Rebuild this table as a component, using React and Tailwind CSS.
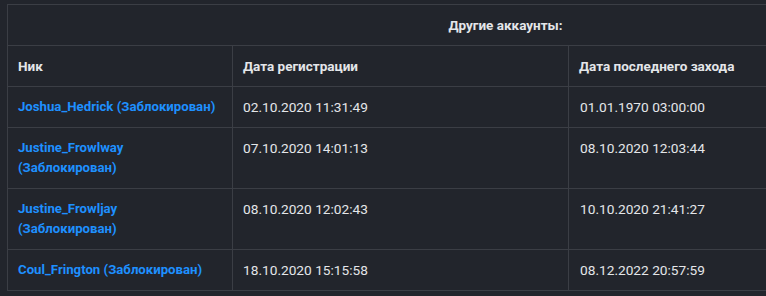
const ACCOUNTS = [
  { nick: 'Joshua_Hedrick', reg: '02.10.2020 11:31:49', last: '01.01.1970 03:00:00' },
  { nick: 'Justine_Frowlway', reg: '07.10.2020 14:01:13', last: '08.10.2020 12:03:44', wrap: true },
  { nick: 'Justine_Frowljay', reg: '08.10.2020 12:02:43', last: '10.10.2020 21:41:27', wrap: true },
  { nick: 'Coul_Frington', reg: '18.10.2020 15:15:58', last: '08.12.2022 20:57:59' },
]

function App() {
  return (
    <div className="min-h-[296px] bg-[#22252c] overflow-hidden pl-[7px] pt-[4px]" style={{ fontFamily: 'Roboto, sans-serif' }}>
      <table className="w-[996px] table-fixed border-collapse text-[13px] leading-[20px] text-[#e4e6e9]">
        <colgroup>
          <col className="w-[225px]" />
          <col className="w-[336px]" />
          <col className="w-[435px]" />
        </colgroup>
        <thead>
          <tr>
            <th colSpan={3} className="border border-[#3b3e45] px-[10px] py-[10px] text-center font-bold text-[13.5px]">
              Другие аккаунты:
            </th>
          </tr>
          <tr>
            <th className="border border-[#3b3e45] px-[10px] py-[10px] text-left font-bold text-[13.5px]">Ник</th>
            <th className="border border-[#3b3e45] px-[10px] py-[10px] text-left font-bold text-[13.5px]">Дата регистрации</th>
            <th className="border border-[#3b3e45] px-[10px] py-[10px] text-left font-bold text-[13.5px]">Дата последнего захода</th>
          </tr>
        </thead>
        <tbody>
          {ACCOUNTS.map(a => (
            <tr key={a.nick}>
              <td className="border border-[#3b3e45] px-[10px] py-[10px] align-top">
                <a href="#" className="font-bold text-[13.2px] text-[#1e90ff]">
                  {a.nick}{a.wrap ? <br /> : ' '}(Заблокирован)
                </a>
              </td>
              <td className="border border-[#3b3e45] px-[10px] py-[10px] align-top text-[13.7px]">{a.reg}</td>
              <td className="border border-[#3b3e45] px-[11px] py-[10px] align-top text-[13.7px]">{a.last}</td>
            </tr>
          ))}
        </tbody>
      </table>
    </div>
  )
}

export default App
